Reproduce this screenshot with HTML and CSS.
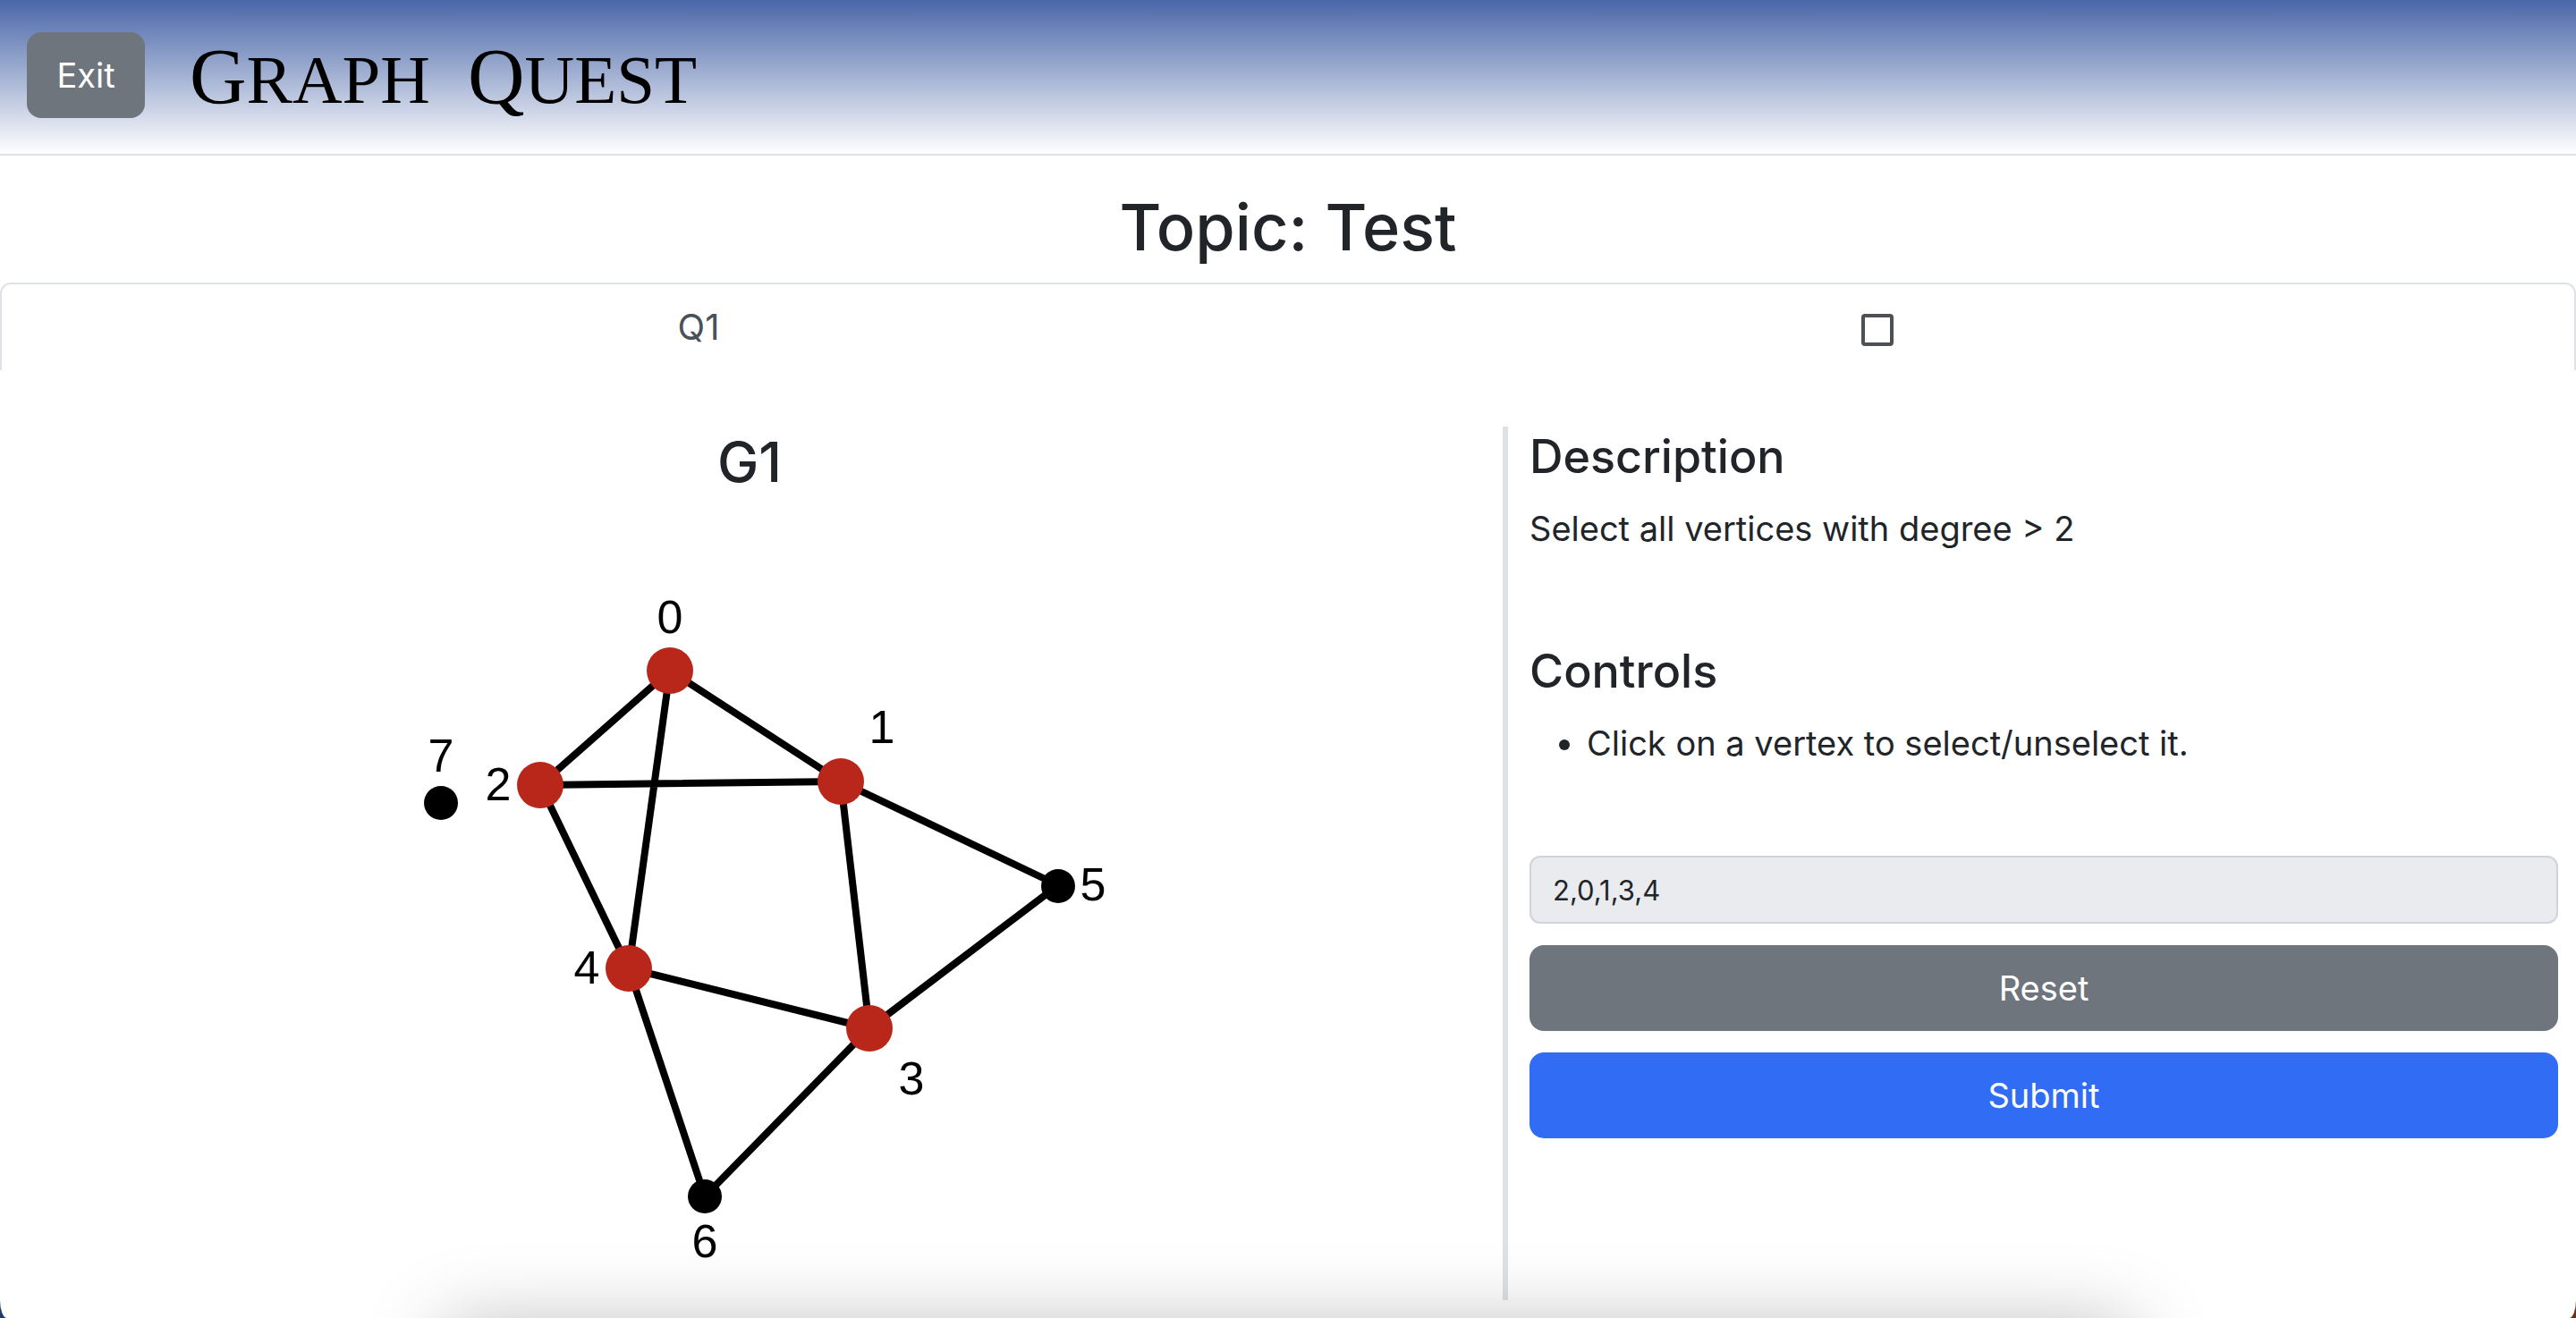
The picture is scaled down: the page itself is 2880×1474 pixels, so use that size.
FILE: index.html
```html
<!DOCTYPE html>
<html lang="en">
<head>
  <meta charset="utf-8">
  <meta name="viewport" content="width=device-width, initial-scale=1">
  <title>Graph Quest</title>
  <link rel="stylesheet" href="styles.css">
</head>
<body>
  <div class="page">
    <header class="site-header">
      <button type="button" class="btn btn-secondary btn-exit">Exit</button>
      <div class="brand"><span>G<small>RAPH</small></span> <span>Q<small>UEST</small></span></div>
    </header>

    <h1 class="topic">Topic: Test</h1>

    <nav class="tabs" aria-label="Questions">
      <a class="tab" href="#question">Q1</a>
      <div class="tab"><input class="tab-check" type="checkbox" aria-label="Question 1 complete"></div>
    </nav>

    <main class="question" id="question">
      <section class="graph-panel">
        <h2 class="graph-title">G1</h2>
        <svg class="graph" viewBox="0 556 1680 898" role="img" aria-label="Graph G1">
          <g class="edges">
            <path d="M749 751 940 875M749 751 604 879M749 751 703 1084M604 879 940 875M604 879 703 1084M940 875 972 1151M940 875 1183 991M1183 991 972 1151M703 1084 972 1151M703 1084 788 1339M972 1151 788 1339"/>
          </g>
          <g class="selected">
            <circle cx="749" cy="751" r="26"/>
            <circle cx="940" cy="875" r="26"/>
            <circle cx="604" cy="879" r="26"/>
            <circle cx="972" cy="1151" r="26"/>
            <circle cx="703" cy="1084" r="26"/>
          </g>
          <g class="vertices">
            <circle cx="1183" cy="992" r="19"/>
            <circle cx="788" cy="1339" r="19"/>
            <circle cx="493" cy="899" r="19"/>
          </g>
          <g class="labels">
            <text x="749" y="709">0</text>
            <text x="986" y="832">1</text>
            <text x="557" y="896">2</text>
            <text x="1019" y="1225">3</text>
            <text x="656" y="1101">4</text>
            <text x="1222" y="1008">5</text>
            <text x="788" y="1407">6</text>
            <text x="493" y="864">7</text>
          </g>
        </svg>
      </section>

      <section class="side-panel">
        <h3 class="side-title">Description</h3>
        <p class="side-text">Select all vertices with degree &gt; 2</p>
        <h3 class="side-title">Controls</h3>
        <ul class="side-text side-list">
          <li>Click on a vertex to select/unselect it.</li>
        </ul>
        <form class="answer">
          <input class="answer-field" type="text" value="2,0,1,3,4" aria-label="Selected vertices" readonly>
          <button type="button" class="btn btn-secondary">Reset</button>
          <button type="button" class="btn btn-primary">Submit</button>
        </form>
      </section>
    </main>
    <div class="dock-shadow"></div>
  </div>
</body>
</html>
```
FILE: styles.css
```css
* {
  box-sizing: border-box;
}

html {
  background: linear-gradient(90deg, #1f3c6e, #6b3216);
}

body {
  margin: 0;
  font-family: Inter, "Liberation Sans", sans-serif;
  font-size: 38px;
  line-height: 60px;
  color: #212529;
}

h1, h2, h3, p, ul {
  margin: 0;
}

.page {
  position: relative;
  display: flex;
  flex-direction: column;
  min-height: 100vh;
  overflow: hidden;
  background: #fff;
  border-radius: 0 0 8px 8px / 0 0 20px 20px;
}

.site-header {
  display: flex;
  align-items: center;
  gap: 50px;
  padding: 36px 30px 40px;
  border-bottom: 2px solid #dee2e6;
  background: linear-gradient(#4a67a8, #fff);
}

.brand {
  padding-top: 4px;
  font-family: "Liberation Serif", serif;
  font-size: 88px;
  line-height: 92px;
  color: #000;
}

.brand span + span {
  margin-left: 20px;
}

.brand small {
  font-size: 77px;
  line-height: 1;
}

.btn {
  height: 96px;
  padding: 0 32px;
  border: 0;
  border-radius: 16px;
  font: inherit;
  color: #fff;
}

.btn-exit {
  min-width: 132px;
}

.btn-secondary {
  background: #6e757c;
}

.btn-primary {
  background: #316cf4;
}

.topic {
  padding: 32px 0 14px;
  font-size: 72px;
  font-weight: 500;
  line-height: 96px;
  text-align: center;
}

.tabs {
  display: grid;
  grid-template-columns: 1fr 1fr;
  padding: 18px 120px;
  border: 2px solid #dee2e6;
  border-bottom: 0;
  border-radius: 12px 12px 0 0;
  font-size: 40px;
  text-align: center;
}

.tab {
  color: #495057;
  text-decoration: none;
}

.tab-check {
  appearance: none;
  width: 36px;
  height: 36px;
  margin: 0;
  border: 4px solid #4d5157;
  border-radius: 4px;
  vertical-align: middle;
}

.question {
  flex: 1;
  display: grid;
  grid-template-columns: minmax(0, 7fr) minmax(0, 5fr);
  margin: 63px 0 20px;
}

.graph-title {
  padding: 2px 4px 0 0;
  font-size: 62px;
  font-weight: 500;
  line-height: 76px;
  text-align: center;
}

.graph {
  display: block;
  width: 100%;
}

.edges {
  fill: none;
  stroke: #000;
  stroke-width: 8;
}

.selected {
  fill: #b9271b;
}

.labels {
  font-family: "Liberation Sans", Arial, sans-serif;
  font-size: 52px;
  text-anchor: middle;
}

.side-panel {
  padding: 0 20px 0 24px;
  border-left: 6px solid #dee2e6;
}

.side-title {
  margin-bottom: 16px;
  font-size: 52px;
  font-weight: 500;
  line-height: 68px;
}

.side-text {
  margin-bottom: 96px;
}

.side-list {
  padding-left: 64px;
}

.answer {
  display: flex;
  flex-direction: column;
  gap: 24px;
}

.answer-field {
  height: 76px;
  padding: 0 24px;
  border: 2px solid #ced4da;
  border-radius: 12px;
  background: #e9ebef;
  font: inherit;
  font-size: 31px;
  color: #212529;
}

.dock-shadow {
  position: absolute;
  right: 496px;
  bottom: -110px;
  left: 496px;
  height: 100px;
  box-shadow: 0 0 90px rgba(0, 0, 0, 0.28);
  pointer-events: none;
}
```
